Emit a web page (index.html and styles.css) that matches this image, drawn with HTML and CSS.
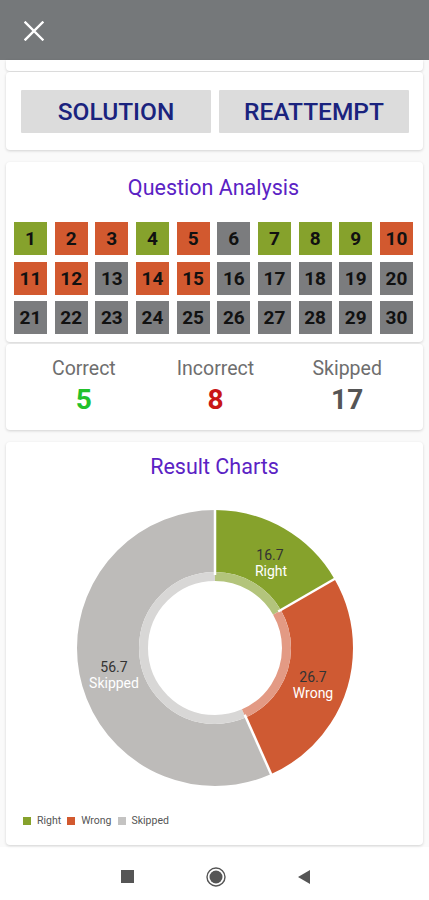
FILE: index.html
```html
<!DOCTYPE html>
<html>
<head>
<meta charset="utf-8">
<link rel="stylesheet" href="styles.css">
</head>
<body>
<div class="topbar">
  <svg class="close" width="20" height="20" viewBox="0 0 20 20"><path d="M1.5 1.5 L18.5 18.5 M18.5 1.5 L1.5 18.5" stroke="#fff" stroke-width="2.4" stroke-linecap="square" fill="none"/></svg>
</div>
<main class="content">
  <div class="card prev"></div>
  <section class="card actions">
    <button class="btn">SOLUTION</button>
    <button class="btn">REATTEMPT</button>
  </section>
  <section class="card analysis">
    <h2 class="title">Question Analysis</h2>
    <div class="grid">
      <span class="q ok">1</span><span class="q bad">2</span><span class="q bad">3</span><span class="q ok">4</span><span class="q bad">5</span><span class="q skip">6</span><span class="q ok">7</span><span class="q ok">8</span><span class="q ok">9</span><span class="q bad">10</span>
      <span class="q bad">11</span><span class="q bad">12</span><span class="q skip">13</span><span class="q bad">14</span><span class="q bad">15</span><span class="q skip">16</span><span class="q skip">17</span><span class="q skip">18</span><span class="q skip">19</span><span class="q skip">20</span>
      <span class="q skip">21</span><span class="q skip">22</span><span class="q skip">23</span><span class="q skip">24</span><span class="q skip">25</span><span class="q skip">26</span><span class="q skip">27</span><span class="q skip">28</span><span class="q skip">29</span><span class="q skip">30</span>
    </div>
  </section>
  <section class="card stats">
    <div class="stat"><div class="label">Correct</div><div class="value green">5</div></div>
    <div class="stat"><div class="label">Incorrect</div><div class="value red">8</div></div>
    <div class="stat"><div class="label">Skipped</div><div class="value gray">17</div></div>
  </section>
  <section class="card charts">
    <h2 class="title">Result Charts</h2>
    <svg class="donut" width="417" height="330" viewBox="0 0 417 330">
      <g transform="rotate(-90 209 169)">
        <circle cx="209" cy="169" r="107" fill="none" stroke="#bdbbb9" stroke-width="62" stroke-dasharray="381.0 672.3" stroke-dashoffset="-291.35"/>
        <circle cx="209" cy="169" r="107" fill="none" stroke="#86a22c" stroke-width="62" stroke-dasharray="112.05 672.3" stroke-dashoffset="0"/>
        <circle cx="209" cy="169" r="107" fill="none" stroke="#cf5a33" stroke-width="62" stroke-dasharray="179.3 672.3" stroke-dashoffset="-112.05"/>
        <circle cx="209" cy="169" r="71.5" fill="none" stroke="#d8d7d6" stroke-width="9" stroke-dasharray="254.5 449.2" stroke-dashoffset="-194.7"/>
        <circle cx="209" cy="169" r="71.5" fill="none" stroke="#b3c47c" stroke-width="9" stroke-dasharray="74.87 449.2" stroke-dashoffset="0"/>
        <circle cx="209" cy="169" r="71.5" fill="none" stroke="#e39a84" stroke-width="9" stroke-dasharray="119.8 449.2" stroke-dashoffset="-74.87"/>
      </g>
      <g stroke="#fff" stroke-width="2.5">
        <line x1="209" y1="96" x2="209" y2="28"/>
        <line x1="272.2" y1="132.5" x2="330.2" y2="99"/>
        <line x1="238.7" y1="235.7" x2="265.9" y2="296.9"/>
      </g>
      <g class="lbl" text-anchor="middle">
        <text x="264" y="81" class="num">16.7</text>
        <text x="265" y="97" class="name">Right</text>
        <text x="307" y="203" class="num">26.7</text>
        <text x="307" y="219" class="name">Wrong</text>
        <text x="108" y="193" class="num">56.7</text>
        <text x="108" y="209" class="name">Skipped</text>
      </g>
    </svg>
    <div class="legend">
      <span class="key"><i class="sw sw-g"></i>Right</span>
      <span class="key"><i class="sw sw-r"></i>Wrong</span>
      <span class="key"><i class="sw sw-s"></i>Skipped</span>
    </div>
  </section>
</main>
<nav class="navbar">
  <span class="nav-square"></span>
  <svg width="20" height="20" viewBox="0 0 20 20"><circle cx="10" cy="10" r="9" fill="none" stroke="#555" stroke-width="1.4"/><circle cx="10" cy="10" r="6.5" fill="#555"/></svg>
  <svg width="12" height="14" viewBox="0 0 12 14"><path d="M12 0 L12 14 L0 7 Z" fill="#555"/></svg>
</nav>
</body>
</html>
```
FILE: styles.css
```css
* { box-sizing: border-box; }
html, body { margin: 0; padding: 0; }
body {
  width: 429px;
  height: 900px;
  background: #fafafa;
  font-family: Roboto, "Noto Sans", "Liberation Sans", sans-serif;
  overflow: hidden;
}
.topbar {
  height: 60px;
  background: #75787a;
  display: flex;
  align-items: center;
  padding-left: 24px;
}
.close { display: block; margin-top: 1px; }
.content {
  display: flex;
  flex-direction: column;
  padding: 0 6px;
}
.card {
  background: #fff;
  border-radius: 4px;
  box-shadow: 0 1px 3px rgba(0,0,0,0.16);
}
.prev {
  height: 11px;
  border-radius: 0 0 4px 4px;
}
.actions {
  margin-top: 1px;
  height: 78px;
  display: flex;
  gap: 8px;
  padding: 18px 14px 0 15px;
}
.btn {
  width: 190px;
  height: 43px;
  border: none;
  background: #dcdcdc;
  color: #1a237e;
  font-family: Roboto, "Noto Sans", sans-serif;
  font-size: 24.5px;
  font-weight: 500;
  padding: 0;
  border-radius: 1px;
}
.analysis {
  margin-top: 12px;
  height: 180px;
  padding: 14px 10px 0 8px;
}
.title {
  margin: 0;
  text-align: center;
  font-size: 21.5px;
  line-height: 24px;
  font-weight: 400;
  color: #5a22c4;
}
.grid {
  margin-top: 22px;
  display: grid;
  grid-template-columns: repeat(10, 33px);
  justify-content: space-between;
  row-gap: 6.5px;
}
.q {
  height: 33px;
  display: flex;
  align-items: center;
  justify-content: center;
  font-size: 19px;
  font-weight: 700;
  color: #111;
}
.ok { background: #86a22c; }
.bad { background: #d2592f; }
.skip { background: #7b7c7e; }
.stats {
  margin-top: 2px;
  height: 86px;
  display: grid;
  grid-template-columns: repeat(3, 1fr);
  padding: 13px 10px 0 12px;
  text-align: center;
}
.label {
  font-size: 19.5px;
  line-height: 23px;
  color: #6e6e6e;
}
.value {
  font-size: 28px;
  line-height: 31px;
  font-weight: 700;
  margin-top: 4px;
}
.green { color: #22c12b; }
.red { color: #c91616; }
.gray { color: #555; }
.charts {
  margin-top: 12px;
  height: 403px;
  padding-top: 13px;
}
.donut { display: block; }
.lbl .num { font-size: 14px; fill: #333; }
.lbl .name { font-size: 14px; fill: #fff; }
.legend {
  display: flex;
  gap: 6px;
  padding-left: 17px;
  margin-top: 5px;
  font-size: 10.5px;
  line-height: 14px;
  color: #555;
}
.key { display: flex; align-items: center; gap: 6px; }
.sw { display: block; width: 8px; height: 8px; }
.sw-g { background: #86a22c; }
.sw-r { background: #d2592f; }
.sw-s { background: #c4c3c2; }
.navbar {
  margin-top: 2px;
  height: 55px;
  background: #fff;
  display: flex;
  align-items: center;
  justify-content: center;
  gap: 72px;
  padding-left: 1px;
  padding-top: 4px;
}
.nav-square {
  width: 13px;
  height: 13px;
  background: #555;
  display: block;
}
```
